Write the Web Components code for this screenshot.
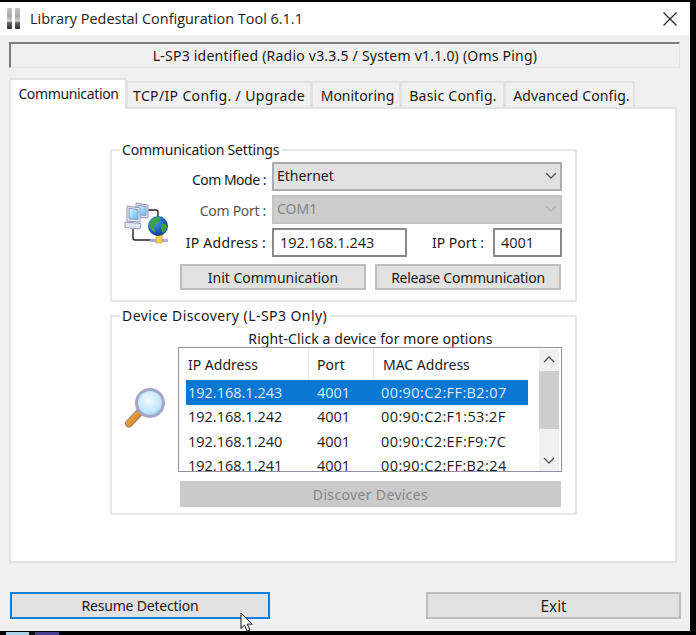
<!DOCTYPE html>
<html>
<head>
<meta charset="utf-8">
<title>Library Pedestal Configuration Tool</title>
<style>
html, body { margin: 0; height: 635px; overflow: hidden; background: #000; }
body { font: 14px "Noto Sans", sans-serif; color: #1a1a1a; }
</style>
</head>
<body>
<config-window>
  <title-bar slot="title">Library Pedestal Configuration Tool 6.1.1</title-bar>
  <status-panel slot="status">L-SP3 identified (Radio v3.3.5 / System v1.1.0) (Oms Ping)</status-panel>
  <tab-strip slot="tabs"></tab-strip>
  <comm-page slot="page"></comm-page>
  <win-button slot="resume" focused style="width:260px;height:27px;letter-spacing:-.2px">Resume Detection</win-button>
  <win-button slot="exit" sans style="width:255px;height:27px">Exit</win-button>
</config-window>

<script>
const ICON_NET = `<svg width="46" height="46" viewBox="0 0 46 46">
  <defs>
    <linearGradient id="scr" x1="0" y1="0" x2="1" y2="1"><stop offset="0" stop-color="#d8f3ff"/><stop offset="1" stop-color="#5cbcf2"/></linearGradient>
    <radialGradient id="sea" cx=".35" cy=".3" r=".8"><stop offset="0" stop-color="#4aa0ee"/><stop offset="1" stop-color="#0b2f8e"/></radialGradient>
  </defs>
  <path d="M9 27v9a2 2 0 0 0 2 2h16M24 8h8a2 2 0 0 1 2 2v6" fill="none" stroke="#222" stroke-width="1.400"/>
  <g stroke="#9298b8" stroke-width="1">
    <path d="M12 1l12 2v13l-12-1z" fill="#dfe5f5"/><path d="M14 3.200l8 1.300v9l-8-.8z" fill="url(#scr)"/>
    <path d="M3 4l13 2v14l-13-1z" fill="#e8ecf8"/><path d="M5 6.200l9 1.400v10l-9-.8z" fill="url(#scr)"/>
    <path d="M1 20l16 1.500-1 5.500-15-1.500z" fill="#e2e6f4"/>
  </g>
  <rect x="26" y="37" width="18" height="3" rx="1" fill="#b9a2d8"/>
  <rect x="32" y="33" width="6" height="8" fill="#f2d14f" stroke="#b89a2a" stroke-width=".6"/>
  <circle cx="34" cy="24" r="10" fill="url(#sea)"/>
  <path d="M26.500 20c3-4 6-5 9-5 2 2 0 4-2 5-1 3-3 2-4 5l2 5c-3 0-5-3-6-6zM37 22c3-1 4 0 6 2 0 3-1 5-4 7-2-2-1-4-2-5z" fill="#3da43a"/>
</svg>`;

const ICON_LENS = `<svg width="42" height="41" viewBox="0 0 42 41">
  <defs>
    <radialGradient id="glass" cx=".45" cy=".4" r=".65"><stop offset="0" stop-color="#f2fbff"/><stop offset=".7" stop-color="#bfe5f8"/><stop offset="1" stop-color="#86bfe6"/></radialGradient>
    <linearGradient id="handle" x1="0" y1="0" x2="1" y2="1"><stop offset="0" stop-color="#f7b65a"/><stop offset="1" stop-color="#d07414"/></linearGradient>
  </defs>
  <path d="M16 24L5 35.500" stroke="#9a8a80" stroke-width="8" stroke-linecap="round"/>
  <path d="M16 24L5 35.500" stroke="url(#handle)" stroke-width="6" stroke-linecap="round"/>
  <circle cx="26" cy="15" r="13.500" fill="url(#glass)" stroke="#a3a6c4" stroke-width="3"/>
</svg>`;

const CHEVRON = c => `<svg width="12" height="7" viewBox="0 0 12 7"><path d="M1 1l5 5 5-5" fill="none" stroke="${c}" stroke-width="1.300"/></svg>`;

class ConfigWindow extends HTMLElement {
  constructor() {
    super();
    this.attachShadow({ mode: 'open' }).innerHTML = `
    <style>
      :host { display: block; width: 690px; height: 629px; margin-top: 2px; background: #f0f0f0; position: relative; }
      .body { padding: 7px 0 0 9px; }
      .tabs { margin-top: 10px; }
      .foot { display: flex; margin-top: 29px; padding-left: 1px; width: 671px; justify-content: space-between; }
      .cursor { position: absolute; left: 240px; top: 610px; }
      .strip { position: absolute; left: 6px; top: 630px; display: flex; height: 3px; }
      .strip i { display: block; height: 3px; }
    </style>
    <slot name="title"></slot>
    <div class="body">
      <slot name="status"></slot>
      <div class="tabs"><slot name="tabs"></slot></div>
      <slot name="page"></slot>
      <div class="foot"><slot name="resume"></slot><slot name="exit"></slot></div>
    </div>
    <svg class="cursor" width="14" height="21" viewBox="0 0 14 21"><path d="M1 1v15.500l3.600-3.400 2.600 6.200 2.700-1.200-2.600-6h5z" fill="#fff" stroke="#111" stroke-width="1"/></svg>
    <div class="strip"><i style="width:23px;background:#a9d3e8"></i><i style="width:6px;background:#111"></i><i style="width:24px;background:#4b3f95"></i></div>`;
  }
}

class TitleBar extends HTMLElement {
  constructor() {
    super();
    this.attachShadow({ mode: 'open' }).innerHTML = `
    <style>
      :host { display: flex; align-items: center; height: 33px; background: #fff; font: 14.450px "Open Sans", sans-serif; color: #222; }
      .logo { margin-left: 7px; margin-right: 10px; display: block; }
      .txt { flex: 1; }
      .close { display: block; margin-right: 13px; }
    </style>
    <svg class="logo" width="13" height="21" viewBox="0 0 13 21">
      <defs><linearGradient id="ped" x1="0" y1="0" x2="0" y2="1"><stop offset="0" stop-color="#c4c4c4"/><stop offset=".4" stop-color="#a8a8a8"/><stop offset=".62" stop-color="#d8d8d8"/><stop offset=".7" stop-color="#6a6a6a"/><stop offset="1" stop-color="#2b2b2b"/></linearGradient></defs>
      <rect x="0" y="0" width="5" height="21" rx="1" fill="url(#ped)"/><rect x="8" y="0" width="5" height="21" rx="1" fill="url(#ped)"/>
    </svg>
    <span class="txt"><slot></slot></span>
    <svg class="close" width="14" height="14" viewBox="0 0 14 14"><path d="M.5.5l13 13M13.500.5l-13 13" stroke="#222" stroke-width="1.200"/></svg>`;
  }
}

class StatusPanel extends HTMLElement {
  constructor() {
    super();
    this.attachShadow({ mode: 'open' }).innerHTML = `
    <style>
      :host { display: flex; align-items: center; justify-content: center; box-sizing: border-box; width: 671px; height: 26px;
        border: 1px solid #e4e4e4; border-top: 2px solid #7d7d7d; border-left: 2px solid #7d7d7d; letter-spacing: .22px; }
    </style><slot></slot>`;
  }
}

class TabStrip extends HTMLElement {
  constructor() {
    super();
    // label, tab width, letter-spacing, left nudge of the label
    const tabs = [['Communication', 118, -.35, 1], ['TCP/IP Config. / Upgrade', 186, .35, 0], ['Monitoring', 90, 0, 3], ['Basic Config.', 105, .25, 1], ['Advanced Config.', 131, .1, 4]];
    this.attachShadow({ mode: 'open' }).innerHTML = `
    <style>
      :host { display: flex; align-items: flex-end; height: 29px; position: relative; z-index: 1; }
      .tab { box-sizing: border-box; height: 26px; border: 2px solid #e2e2e2; border-bottom: 0; margin-left: -1px; background: #f0f0f0;
        display: flex; align-items: center; justify-content: center; white-space: nowrap; }
      .tab:first-of-type { margin-left: 0; background: #fff; padding-bottom: 3px; margin-bottom: -2px; height: 31px; position: relative; z-index: 1; }
    </style>
    ${tabs.map(t => `<div class="tab" style="width:${t[1]}px;letter-spacing:${t[2]}px;padding-left:${t[3]}px">${t[0]}</div>`).join('')}`;
  }
}

class WinButton extends HTMLElement {
  constructor() {
    super();
    this.attachShadow({ mode: 'open' }).innerHTML = `
    <style>
      :host { display: flex; flex: none; align-items: center; justify-content: center; box-sizing: border-box; background: #e1e1e1; border: 2px solid #bdbdbd; white-space: nowrap; }
      :host([focused]) { border-color: #0a7fdc; }
      :host([disabled]) { background: #cacaca; border-color: #cacaca; color: #858585; }
      :host([sans]) { font-family: "Open Sans", sans-serif; font-size: 15.500px; }
    </style><slot></slot>`;
  }
}

class GroupBox extends HTMLElement {
  constructor() {
    super();
    this.attachShadow({ mode: 'open' }).innerHTML = `
    <style>
      :host { display: block; box-sizing: border-box; width: 467px; border: 2px solid #e6e6e6; position: relative; margin-left: 99px; }
      .legend { position: absolute; left: 8px; top: -11px; padding: 0 2px; background: #fff; line-height: 20px; white-space: nowrap; }
    </style>
    <div class="legend"><slot name="legend"></slot></div><slot></slot>`;
  }
}

class ComboBox extends HTMLElement {
  constructor() {
    super();
    this.attachShadow({ mode: 'open' }).innerHTML = `
    <style>
      :host { display: flex; align-items: center; box-sizing: border-box; height: 29px; padding: 0 3px 2px 3px; background: #e1e1e1; border: 2px solid #adadad; justify-content: space-between; }
      :host([disabled]) { background: #cccccc; border-color: #c4c4c4; color: #858585; }
    </style>
    <span><slot></slot></span>${CHEVRON(this.hasAttribute('disabled') ? '#b4b4b4' : '#555')}`;
  }
}

class TextField extends HTMLElement {
  constructor() {
    super();
    this.attachShadow({ mode: 'open' }).innerHTML = `
    <style>
      :host { display: flex; align-items: center; box-sizing: border-box; height: 29px; padding: 0 6px; background: #fff; border: 2px solid #8a8a8a; font-family: "Open Sans", sans-serif; font-size: 14.500px; }
    </style><slot></slot>`;
  }
}

class DeviceList extends HTMLElement {
  constructor() {
    super();
    const rows = [
      ['192.168.1.243', '4001', '00:90:C2:FF:B2:07'],
      ['192.168.1.242', '4001', '00:90:C2:F1:53:2F'],
      ['192.168.1.240', '4001', '00:90:C2:EF:F9:7C'],
      ['192.168.1.241', '4001', '00:90:C2:FF:B2:24']
    ];
    this.attachShadow({ mode: 'open' }).innerHTML = `
    <style>
      :host { display: flex; box-sizing: border-box; width: 384px; height: 125px; border: 1px solid #8f929c; background: #fff; overflow: hidden; }
      .view { width: 350px; overflow: hidden; }
      .head { display: grid; grid-template-columns: 130px 65px 1fr; height: 32px; }
      .head div { display: flex; align-items: center; padding-left: 9px; border-right: 1px solid #e5e5e5; white-space: nowrap; }
      .head div:nth-child(2) { padding-left: 8px; }
      .head div:last-child { border-right: 0; }
      .row { display: grid; grid-template-columns: 122px 65px 1fr; height: 24.500px; margin-left: 7px; width: 342px; align-items: center; font: 14.500px "Open Sans", sans-serif; }
      .row span { padding-left: 9px; }
      .row span:first-child { padding-left: 2px; }
      .row span:last-child { padding-left: 8px; letter-spacing: .4px; }
      .row.sel { background: #0a78d2; color: #dcecfa; }
      .bar { width: 20px; margin-left: 10px; height: 122px; margin-top: 1px; background: #f0f0f0; display: flex; flex-direction: column; align-items: center; }
      .btn { height: 22px; display: flex; align-items: center; justify-content: center; flex: none; }
      .thumb { width: 100%; height: 58px; background: #cdcdcd; flex: none; }
      .rest { flex: 1; }
    </style>
    <div class="view">
      <div class="head"><div>IP Address</div><div>Port</div><div>MAC Address</div></div>
      ${rows.map((r, i) => `<div class="row${i == 0 ? ' sel' : ''}">${r.map(c => `<span>${c}</span>`).join('')}</div>`).join('')}
    </div>
    <div class="bar">
      <div class="btn" style="transform:scaleY(-1)">${CHEVRON('#555')}</div>
      <div class="thumb"></div><div class="rest"></div>
      <div class="btn">${CHEVRON('#555')}</div>
    </div>`;
  }
}

class CommPage extends HTMLElement {
  constructor() {
    super();
    this.attachShadow({ mode: 'open' }).innerHTML = `
    <style>
      :host { display: block; box-sizing: border-box; width: 668px; height: 456px; background: #fff; border: 2px solid #e2e2e2; padding-top: 40px; white-space: nowrap; }
      .g1 { height: 153px; }
      .g2 { height: 200px; margin-top: 13px; }
      .form { display: grid; grid-template-columns: 68px 86px 290px; padding-top: 11px; grid-template-rows: 29px 29px 29px 26px; row-gap: 4px; }
      .icon { grid-row: 1 / 4; grid-column: 1; display: flex; justify-content: flex-end; align-items: center; padding-right: 10px; padding-top: 30px; }
      .lab { grid-column: 2; display: flex; align-items: center; justify-content: flex-end; padding-right: 0; }
      .lab.dim { color: #555; padding-top: 2px; }
      .lab.first { padding-top: 6px; letter-spacing: -.5px; }
      .f { grid-column: 3; margin-left: 6px; width: 290px; box-sizing: border-box; }
      .ip { display: flex; align-items: center; justify-content: space-between; }
      .ip span { margin-left: auto; margin-right: 9px; }
      .btns { grid-column: 2 / 4; display: flex; gap: 9px; margin-top: 3px; }
      .disc { display: grid; grid-template-columns: 66px 385px; padding-top: 14px; }
      .hint { grid-column: 2; text-align: center; line-height: 16px; letter-spacing: .1px; }
      .lens { grid-row: 2; display: flex; justify-content: flex-end; padding-right: 12px; align-items: center; padding-bottom: 3px; }
      .dbtn { grid-column: 2; margin: 9px 0 0 2px; letter-spacing: .35px; }
    </style>
    <group-box class="g1">
      <span slot="legend" style="letter-spacing:-.2px">Communication Settings</span>
      <div class="form">
        <div class="icon">${ICON_NET}</div>
        <div class="lab first">Com Mode :</div><combo-box class="f">Ethernet</combo-box>
        <div class="lab dim" style="letter-spacing:-.3px">Com Port :</div><combo-box class="f" disabled>COM1</combo-box>
        <div class="lab" style="letter-spacing:.25px">IP Address :</div>
        <div class="f ip"><text-field style="width:135px">192.168.1.243</text-field><span>IP Port :</span><text-field style="width:69px">4001</text-field></div>
        <div class="btns"><win-button style="width:186px;height:26px">Init Communication</win-button><win-button style="width:186px;height:26px;letter-spacing:-.25px">Release Communication</win-button></div>
      </div>
    </group-box>
    <group-box class="g2">
      <span slot="legend" style="letter-spacing:.45px">Device Discovery (L-SP3 Only)</span>
      <div class="disc">
        <div class="hint">Right-Click a device for more options</div>
        <div class="lens">${ICON_LENS}</div>
        <device-list></device-list>
        <win-button class="dbtn" disabled style="width:381px;height:26px">Discover Devices</win-button>
      </div>
    </group-box>`;
  }
}

customElements.define('win-button', WinButton);
customElements.define('group-box', GroupBox);
customElements.define('combo-box', ComboBox);
customElements.define('text-field', TextField);
customElements.define('device-list', DeviceList);
customElements.define('title-bar', TitleBar);
customElements.define('status-panel', StatusPanel);
customElements.define('tab-strip', TabStrip);
customElements.define('comm-page', CommPage);
customElements.define('config-window', ConfigWindow);
</script>
</body>
</html>
